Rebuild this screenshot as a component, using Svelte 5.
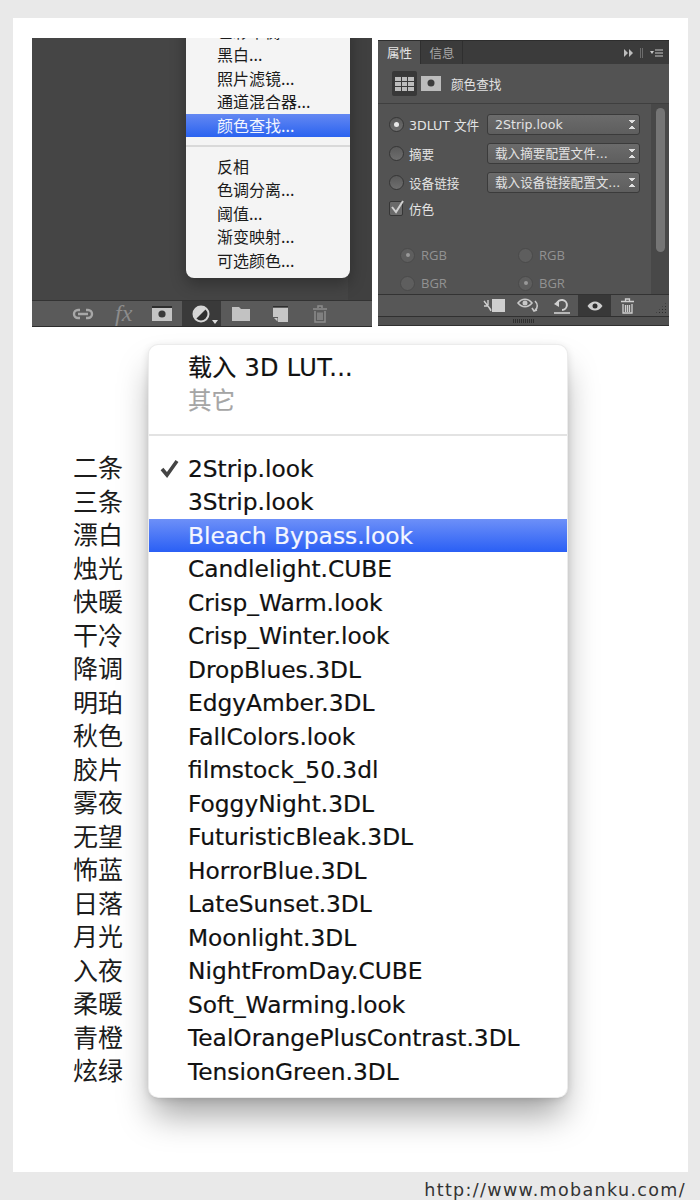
<script>
  const adjustments = [
    { label: '色彩平衡...' },
    { label: '黑白...' },
    { label: '照片滤镜...' },
    { label: '通道混合器...' },
    { label: '颜色查找...', active: true },
    { sep: true },
    { label: '反相' },
    { label: '色调分离...' },
    { label: '阈值...' },
    { label: '渐变映射...' },
    { label: '可选颜色...' },
  ];

  const looks = [
    ['二条', '2Strip.look'],
    ['三条', '3Strip.look'],
    ['漂白', 'Bleach Bypass.look'],
    ['烛光', 'Candlelight.CUBE'],
    ['快暖', 'Crisp_Warm.look'],
    ['干冷', 'Crisp_Winter.look'],
    ['降调', 'DropBlues.3DL'],
    ['明珀', 'EdgyAmber.3DL'],
    ['秋色', 'FallColors.look'],
    ['胶片', 'filmstock_50.3dl'],
    ['雾夜', 'FoggyNight.3DL'],
    ['无望', 'FuturisticBleak.3DL'],
    ['怖蓝', 'HorrorBlue.3DL'],
    ['日落', 'LateSunset.3DL'],
    ['月光', 'Moonlight.3DL'],
    ['入夜', 'NightFromDay.CUBE'],
    ['柔暖', 'Soft_Warming.look'],
    ['青橙', 'TealOrangePlusContrast.3DL'],
    ['炫绿', 'TensionGreen.3DL'],
  ];

  const sources = [
    { label: '3DLUT 文件', value: '2Strip.look', on: true },
    { label: '摘要', value: '载入摘要配置文件...' },
    { label: '设备链接', value: '载入设备链接配置文...' },
  ];
</script>

<div class="page">
  <div class="sheet">
    <div class="shots">
      <section class="layers">
        <div class="canvas">
          <div class="gutter"></div>
          <div class="popup">
            {#each adjustments as item}
              {#if item.sep}
                <div class="popup-sep"></div>
              {:else}
                <div class="popup-row" class:active={item.active}>{item.label}</div>
              {/if}
            {/each}
          </div>
        </div>
        <div class="layer-tools">
          <span class="tool">
            <svg width="22" height="12" viewBox="0 0 22 12"><path d="M8 2H6a4 4 0 0 0 0 8h2M14 2h2a4 4 0 0 1 0 8h-2M6 6h10" fill="none" stroke="#a8a8a8" stroke-width="2.4"/></svg>
          </span>
          <span class="tool fx">fx</span>
          <span class="tool">
            <svg width="20" height="15" viewBox="0 0 20 15"><rect width="20" height="15" fill="#c4c4c4"/><rect width="20" height="2" fill="#2e2e2e"/><circle cx="10" cy="8" r="3.6" fill="#3a3a3a"/></svg>
          </span>
          <span class="tool current">
            <svg width="18" height="18" viewBox="0 0 18 18"><circle cx="9" cy="9" r="7.5" fill="#2f2f2f" stroke="#d6d6d6" stroke-width="2"/><path d="M3.7 14.3 14.3 3.7A7.5 7.5 0 0 0 3.7 14.3Z" fill="#d6d6d6"/></svg>
            <i class="caret"></i>
          </span>
          <span class="tool">
            <svg width="18" height="15" viewBox="0 0 18 15"><path d="M0 1h7l2 2h9v12H0Z" fill="#c2c2c2"/></svg>
          </span>
          <span class="tool">
            <svg width="15" height="16" viewBox="0 0 15 16"><path d="M0 1.500h15V16H5V11H0Z" fill="#c6c6c6"/><path d="M0 0h15v1.500H0Z" fill="#2e2e2e"/><path d="M1 12h3.500v3.500Z" fill="#c6c6c6"/></svg>
          </span>
          <span class="tool">
            <svg width="16" height="18" viewBox="0 0 16 18"><path d="M1 4h14M6 3V1h4v2M3 6v11h10V6M6 7.500V15M8 7.500V15M10 7.500V15" fill="none" stroke="#8c8c8c" stroke-width="1.500"/></svg>
          </span>
        </div>
      </section>

      <section class="props">
        <header class="tabs">
          <span class="tab on">属性</span>
          <span class="tab">信息</span>
          <span class="tab-tools">
            <svg width="40" height="10" viewBox="0 0 40 10"><path d="M0 1l4 4-4 4ZM5 1l4 4-4 4Z" fill="#bdbdbd"/><path d="M16.500 0v10M18.500 0v10" stroke="#6c6c6c"/><path d="M26 3h4l-2 3Z" fill="#c8c8c8"/><path d="M31 2h8M31 5h8M31 8h8" stroke="#c8c8c8"/></svg>
          </span>
        </header>
        <div class="prop-head">
          <span class="grid-tile">
            <svg width="19" height="15" viewBox="0 0 19 15"><rect width="19" height="15" fill="#bdbdbd"/><path d="M0 .500h19M0 5.500h19M0 10.500h19M6.500 0v15M12.500 0v15" stroke="#3a3a3a"/></svg>
          </span>
          <svg class="mask-tile" width="20" height="15" viewBox="0 0 20 15"><rect width="20" height="15" fill="#bcbcbc"/><circle cx="10" cy="7" r="3.500" fill="#3c3c3c"/></svg>
          <span class="prop-title">颜色查找</span>
        </div>
        <div class="prop-body">
          <div class="fields">
            <div class="sources">
              {#each sources as src}
                <span class="radio" class:on={src.on}></span>
                <span class="field-label">{src.label}</span>
                <span class="select">{src.value}<i class="updown"></i></span>
              {/each}
            </div>
            <div class="dither">
              <span class="check">
                <svg width="16" height="16" viewBox="0 0 16 16"><path d="M3 7l4 5 7-11" fill="none" stroke="#d0d0d0" stroke-width="2"/></svg>
              </span>
              <span class="field-label">仿色</span>
            </div>
            <div class="orders">
              <label><span class="radio dim on"></span>RGB</label>
              <label><span class="radio dim"></span>RGB</label>
              <label><span class="radio dim"></span>BGR</label>
              <label><span class="radio dim on"></span>BGR</label>
            </div>
          </div>
          <div class="scroll"><div class="thumb"></div></div>
        </div>
        <div class="prop-tools">
          <span class="ptool wide">
            <svg width="23" height="13" viewBox="0 0 23 13"><rect x="9" width="13" height="13" fill="#cfcfcf"/><path d="M1 2l7 9M1 7h4l3 5M5 1v5" fill="none" stroke="#cfcfcf" stroke-width="1.400"/></svg>
          </span>
          <span class="ptool">
            <svg width="24" height="15" viewBox="0 0 24 15"><path d="M1 5c4-5 10-5 14 0-4 5-10 5-14 0Z" fill="none" stroke="#c8c8c8" stroke-width="1.600"/><circle cx="8" cy="5" r="2.500" fill="#c8c8c8"/><path d="M18 3c3 3 3 7 0 9M15 10l2 3 3-1" fill="none" stroke="#c8c8c8" stroke-width="1.600"/></svg>
          </span>
          <span class="ptool">
            <svg width="18" height="17" viewBox="0 0 18 17"><path d="M4 7a5 5 0 1 1 5 6" fill="none" stroke="#d0d0d0" stroke-width="2"/><path d="M1 7l5-4v7Z" fill="#d0d0d0"/><path d="M1 16h16" stroke="#d0d0d0" stroke-width="1.600"/></svg>
          </span>
          <span class="ptool current">
            <svg width="16" height="10" viewBox="0 0 16 10"><path d="M.500 5c4-6 11-6 15 0-4 6-11 6-15 0Z" fill="#cfcfcf"/><circle cx="8" cy="5" r="2.500" fill="#2f2f2f"/></svg>
          </span>
          <span class="ptool">
            <svg width="15" height="16" viewBox="0 0 15 16"><path d="M1 3.500h13M5.500 3V1h4v2M3 6v9h9V6M5.500 7v7M7.500 7v7M9.500 7v7" fill="none" stroke="#cfcfcf" stroke-width="1.300"/></svg>
          </span>
          <i class="grip"></i>
        </div>
        <div class="prop-foot"><i class="foot-handle"></i></div>
      </section>
    </div>

    <div class="lookups">
      <ol class="names">
        {#each looks as look}
          <li>{look[0]}</li>
        {/each}
      </ol>
      <div class="menu">
        <div class="menu-row head">载入 3D LUT...</div>
        <div class="menu-row muted">其它</div>
        <div class="menu-sep"></div>
        {#each looks as look, i}
          <div class="menu-row" class:active={i === 2}>
            {#if i === 0}
              <svg class="tick" width="20" height="19" viewBox="0 0 20 19"><path d="M2 10l5 6L17 2" fill="none" stroke="#444" stroke-width="3.600"/></svg>
            {/if}
            {look[1]}
          </div>
        {/each}
      </div>
    </div>
  </div>
  <div class="credit">http://www.mobanku.com/</div>
</div>

<style>
  :global(body) {
    background: #e9e9e9;
    font-family: "Noto Sans CJK SC", sans-serif;
  }

  .page {
    box-sizing: border-box;
    height: 1200px;
    padding: 18px 0 0 13px;
    overflow: hidden;
  }

  .sheet {
    box-sizing: border-box;
    width: 675px;
    height: 1154px;
    padding: 20px 0 0 19px;
    background: #fff;
  }

  .shots {
    display: flex;
    align-items: flex-start;
    gap: 6px;
    height: 289px;
  }

  /* left shot: layers panel with the adjustment popup */
  .layers {
    width: 340px;
    height: 289px;
    display: flex;
    flex-direction: column;
    background: #3e3e3e;
    overflow: hidden;
  }

  .canvas {
    flex: 1;
    position: relative;
    background: #454545;
  }

  .gutter {
    position: absolute;
    top: 0;
    right: 0;
    bottom: 0;
    width: 24px;
    background: #404040;
  }

  .popup {
    position: absolute;
    left: 154px;
    bottom: 22px;
    width: 164px;
    padding-bottom: 6px;
    background: #f4f4f4;
    border-radius: 0 0 8px 8px;
    box-shadow: 0 6px 16px rgba(0, 0, 0, 0.3);
  }

  .popup-row {
    height: 23.400px;
    padding-left: 31px;
    font-size: 16px;
    line-height: 23.400px;
    color: #1b1b1b;
    white-space: nowrap;
  }

  .popup-row.active {
    background: linear-gradient(#6488f2, #2a63f0);
    color: #f2f5ff;
  }

  .popup-sep {
    height: 2px;
    margin: 8px 0 8px;
    background: #d9d9d9;
  }

  .layer-tools {
    display: flex;
    height: 27px;
    padding-left: 31px;
    background: #5a5a5a;
    border-top: 1px solid #333;
    border-bottom: 1px solid #2c2c2c;
    box-sizing: border-box;
  }

  .tool {
    position: relative;
    width: 39.500px;
    display: flex;
    align-items: center;
    justify-content: center;
  }

  .tool.current {
    background: #3a3a3a;
  }

  .fx {
    font-family: "Liberation Serif", serif;
    font-style: italic;
    font-size: 24px;
    color: #8c8c8c;
    padding-left: 3px;
    box-sizing: border-box;
  }

  .caret {
    position: absolute;
    right: 3px;
    bottom: 2px;
    border: 3px solid transparent;
    border-top: 4px solid #ddd;
    border-bottom: 0;
  }

  /* right shot: properties panel */
  .props {
    width: 291px;
    height: 286px;
    margin-top: 2px;
    display: flex;
    flex-direction: column;
    background: #535353;
    color: #e2e2e2;
    font-size: 12px;
    overflow: hidden;
  }

  .tabs {
    display: flex;
    height: 24px;
    flex: none;
    background: #3b3b3b;
    border-top: 1px solid #2d2d2d;
    box-sizing: border-box;
  }

  .tab {
    width: 40px;
    padding-left: 1px;
    text-align: center;
    line-height: 23px;
    color: #a8a8a8;
    border-right: 1px solid #2f2f2f;
    font-size: 12.500px;
  }

  .tab.on {
    width: 41px;
    background: #535353;
    color: #e6e6e6;
  }

  .tab-tools {
    margin-left: auto;
    display: flex;
    align-items: center;
    padding-right: 5px;
  }

  .prop-head {
    display: flex;
    align-items: center;
    height: 40px;
    flex: none;
    padding-left: 14px;
    border-bottom: 1px solid #3f3f3f;
    box-sizing: border-box;
  }

  .grid-tile {
    display: flex;
    align-items: center;
    justify-content: center;
    width: 25px;
    height: 25px;
    background: #383838;
    border-radius: 2px;
  }

  .mask-tile {
    margin-left: 4px;
  }

  .prop-title {
    margin-left: 10px;
    font-size: 12.600px;
  }

  .prop-body {
    flex: 1;
    display: flex;
    min-height: 0;
  }

  .fields {
    flex: 1;
    min-width: 0;
    padding: 10px 0 0 11px;
  }

  .sources {
    display: grid;
    grid-template-columns: 20px 78px 153px;
    grid-auto-rows: 21px;
    row-gap: 8px;
    align-items: center;
  }

  .field-label {
    font-family: "DejaVu Sans", "Noto Sans CJK SC", sans-serif;
    font-size: 12.600px;
    color: #e4e4e4;
    white-space: nowrap;
  }

  .radio {
    display: block;
    box-sizing: border-box;
    width: 15px;
    height: 15px;
    border-radius: 50%;
    border: 1px solid #363636;
    background: linear-gradient(#5a5a5a, #6e6e6e);
    position: relative;
  }

  .radio.on::after {
    content: '';
    position: absolute;
    inset: 4px;
    border-radius: 50%;
    background: #e8e8e8;
  }

  .radio.dim {
    border-color: #4a4a4a;
    background: #5e5e5e;
  }

  .radio.dim.on::after {
    inset: 4.500px;
    background: #999;
  }

  .select {
    box-sizing: border-box;
    display: block;
    position: relative;
    height: 21px;
    padding-left: 7px;
    line-height: 19px;
    font-family: "DejaVu Sans", "Noto Sans CJK SC", sans-serif;
    font-size: 12.600px;
    white-space: nowrap;
    border: 1px solid #3b3b3b;
    border-radius: 3px;
    background: linear-gradient(#6b6b6b, #5e5e5e);
  }

  .updown {
    position: absolute;
    right: 4px;
    top: 5px;
    width: 6px;
    height: 9px;
    background:
      linear-gradient(to top right, transparent 50%, #e0e0e0 50%) 0 0 / 3px 4px no-repeat,
      linear-gradient(to top left, transparent 50%, #e0e0e0 50%) 3px 0 / 3px 4px no-repeat,
      linear-gradient(to bottom right, transparent 50%, #e0e0e0 50%) 0 5px / 3px 4px no-repeat,
      linear-gradient(to bottom left, transparent 50%, #e0e0e0 50%) 3px 5px / 3px 4px no-repeat;
  }

  .dither {
    display: flex;
    align-items: center;
    gap: 6px;
    height: 20px;
    margin-top: 5px;
  }

  .check {
    box-sizing: border-box;
    display: block;
    width: 14px;
    height: 15px;
    border: 1px solid #363636;
    border-radius: 2px;
    background: #6a6a6a;
  }

  .check svg {
    margin: -2px 0 0 -1px;
    display: block;
  }

  .orders {
    display: grid;
    grid-template-columns: 118px 118px;
    grid-auto-rows: 28px;
    margin: 23px 0 0 11px;
    align-items: center;
    font-size: 13px;
    font-family: "Open Sans", sans-serif;
    color: #929292;
  }

  .orders label {
    display: flex;
    align-items: center;
    gap: 6px;
  }

  .scroll {
    flex: none;
    width: 18px;
    background: #484848;
    padding: 4px 4px 0 5px;
    box-sizing: border-box;
  }

  .thumb {
    height: 144px;
    border-radius: 5px;
    background: #757575;
  }

  .prop-tools {
    display: flex;
    align-items: stretch;
    justify-content: flex-end;
    position: relative;
    height: 22px;
    flex: none;
    padding-right: 25px;
    background: #575757;
    border-top: 1px solid #333;
    box-sizing: border-box;
  }

  .ptool {
    width: 33px;
    display: flex;
    align-items: center;
    justify-content: center;
  }

  .ptool.wide {
    width: 36px;
  }

  .ptool.current {
    background: #383838;
  }

  .grip {
    position: absolute;
    right: 2px;
    bottom: 2px;
    width: 12px;
    height: 12px;
    background: radial-gradient(circle, #2c2c2c 1px, transparent 1px) 0 0 / 3px 3px;
    clip-path: polygon(100% 0, 100% 100%, 0 100%);
  }

  .prop-foot {
    height: 10px;
    flex: none;
    display: flex;
    align-items: center;
    justify-content: center;
    background: #505050;
    border-top: 1px solid #303030;
    border-bottom: 1px solid #303030;
    box-sizing: border-box;
  }

  .foot-handle {
    width: 22px;
    height: 4px;
    background: repeating-linear-gradient(90deg, #2f2f2f 0 1px, transparent 1px 2px);
  }

  /* lower part: names and the lookup menu */
  .lookups {
    display: flex;
    align-items: flex-start;
    margin-top: 18px;
  }

  .names {
    list-style: none;
    width: 76px;
    margin: 0 0 0 41px;
    padding: 105.250px 0 0;
    font-size: 25px;
    line-height: 33.500px;
    color: #1c1c1c;
  }

  .menu {
    box-sizing: border-box;
    width: 418px;
    height: 752px;
    padding: 6.500px 0 9px;
    background: #fff;
    border-radius: 9px;
    box-shadow:
      0 0 0 1px #ececec,
      0 1px 1px #a0a0a0,
      0 22px 34px -4px rgba(0, 0, 0, 0.36),
      0 2px 8px rgba(0, 0, 0, 0.14);
  }

  .menu-row {
    position: relative;
    height: 33.500px;
    padding-left: 39px;
    font-family: "DejaVu Sans", "Noto Sans CJK SC", sans-serif;
    font-size: 23.300px;
    line-height: 33.500px;
    color: #111;
    white-space: nowrap;
    -webkit-text-stroke: 0.2px currentColor;
  }

  .menu-row.head {
    font-size: 24px;
    letter-spacing: 0.3px;
  }

  .menu-row.muted {
    font-size: 23.500px;
    color: #a5a5a5;
  }

  .menu-row.active {
    background: linear-gradient(#6d90f8, #2a5ff5);
    color: #f4f6ff;
  }

  .tick {
    position: absolute;
    left: 11px;
    top: 7px;
  }

  .menu-sep {
    height: 2px;
    margin: 15px 0 16px;
    background: #e3e3e3;
  }

  .credit {
    width: 673px;
    margin-top: 5px;
    text-align: right;
    font-family: "DejaVu Sans", sans-serif;
    font-size: 17.500px;
    letter-spacing: 1.350px;
    line-height: 26px;
    color: #333;
    white-space: nowrap;
  }
</style>
